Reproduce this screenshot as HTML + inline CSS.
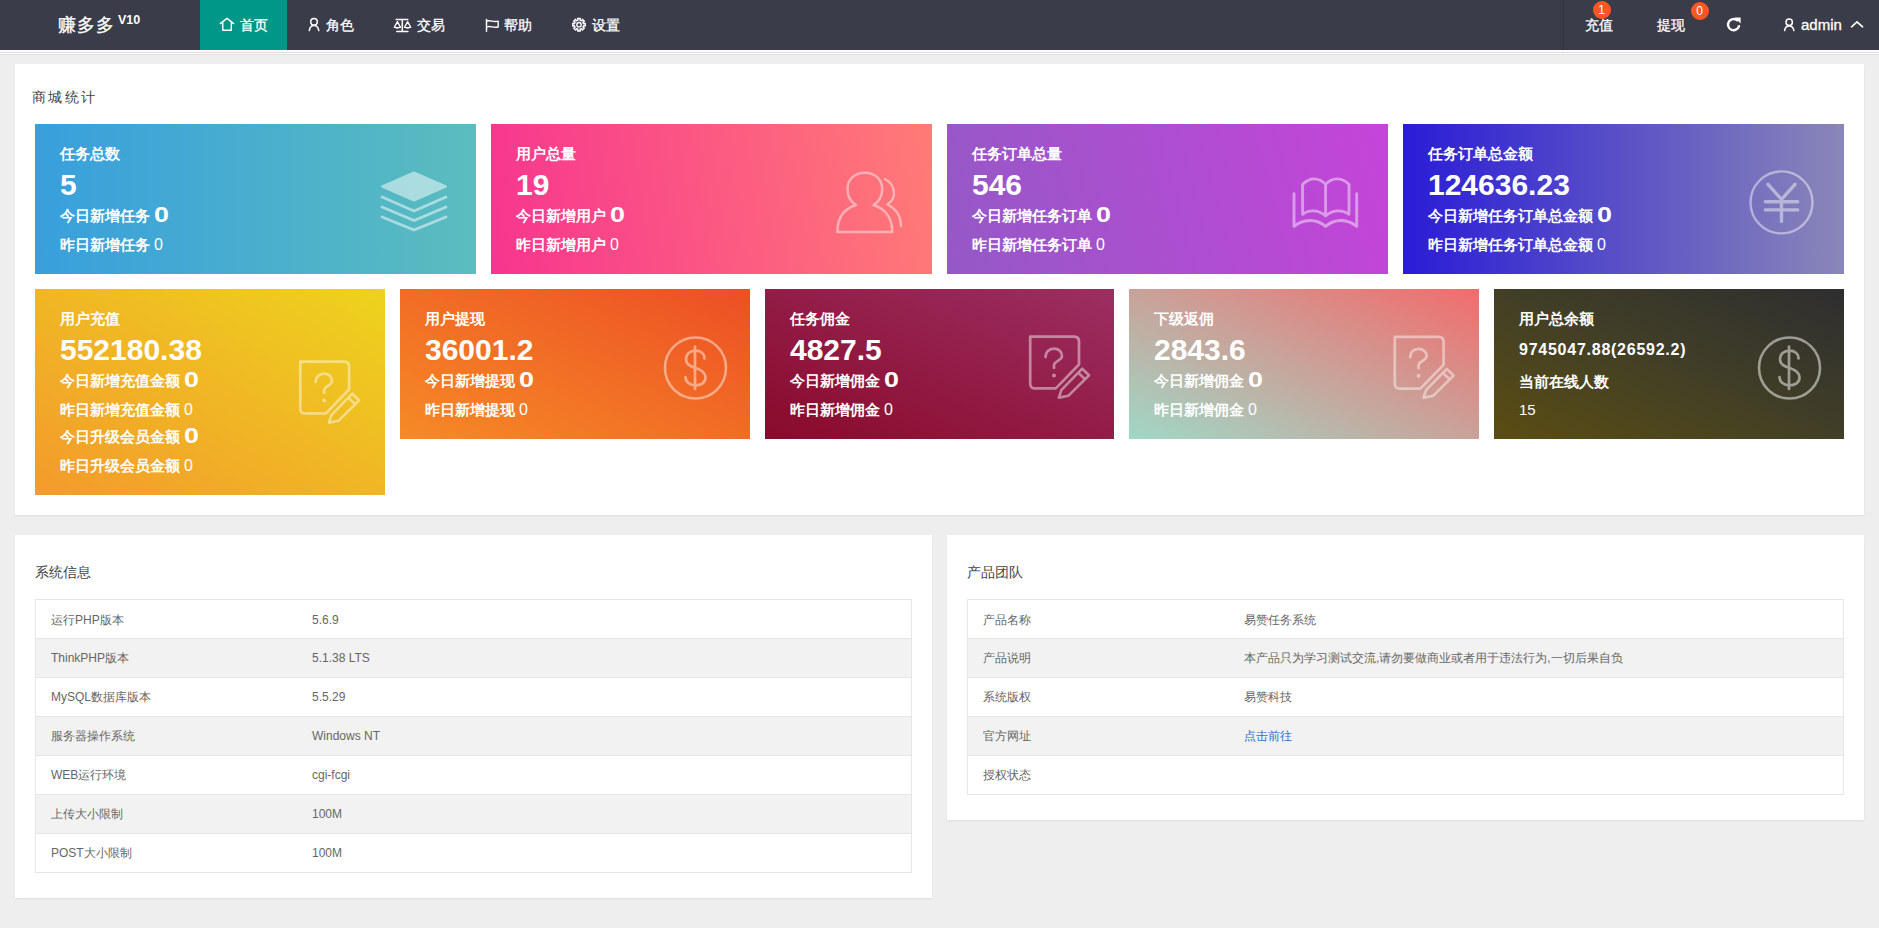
<!DOCTYPE html><html><head><meta charset="utf-8"><title>dashboard</title><style>
*{margin:0;padding:0;box-sizing:border-box}
html,body{width:1879px;height:928px;overflow:hidden}
body{background:#eeeeee;font-family:"Liberation Sans",sans-serif;position:relative;color:#666;font-size:14px}
.hdr{position:absolute;left:0;top:0;width:1879px;height:50px;background:#3a3c4a}
.logo{position:absolute;left:58px;top:0;height:50px;line-height:50px;color:#fff;font-size:18px;white-space:nowrap;-webkit-text-stroke:0.3px #fff}
.logo sup{font-size:12.5px;font-weight:bold;position:absolute;left:60px;top:-5px;line-height:50px;-webkit-text-stroke:0}
.nav{position:absolute;top:0;height:50px;line-height:50px;color:#fff;font-size:14px;white-space:nowrap;-webkit-text-stroke:0.3px #fff}
.nav span{position:absolute;top:0}
.nav.on{background:#009688}
.hdr svg{position:absolute}
.badge{position:absolute;width:18px;height:18px;border-radius:9px;background:#FF5722;color:#fff;font-size:12px;line-height:18px;text-align:center}
.stripe{position:absolute;left:0;width:1879px}
.card{position:absolute;background:#fff;box-shadow:0 1px 2px 0 rgba(0,0,0,.07)}
.ctitle{position:absolute;color:#444;font-size:14px;white-space:nowrap;line-height:20px}
.sc{position:absolute;color:#fff;overflow:hidden}
.sc .l{position:absolute;left:25px;white-space:nowrap;font-weight:bold;font-size:15px}
.sc .n{font-size:30px}
.sc .z{display:inline-block;font-size:22px;margin-left:4px;transform:scaleX(1.22);transform-origin:0 50%;position:relative;top:1px}
.sc .s{font-weight:normal;margin-left:4px;font-size:16px}
.sc svg{position:absolute;left:0;top:0}
.tbl{position:absolute;border:1px solid #e6e6e6;background:#fff}
.tbl .r{position:absolute;left:0;right:0;height:39px;font-size:12px;color:#666;line-height:20px}
.tbl .r.b{border-top:1px solid #e6e6e6}
.tbl .r.g{background:#f2f2f2}
.tbl .c1{position:absolute;left:15px;top:10px;white-space:nowrap}
.tbl .c2{position:absolute;top:10px;white-space:nowrap}
</style></head><body>
<div class="hdr">
<div class="logo"><span style="letter-spacing:1px">赚多多</span><sup>V10</sup></div>
<div class="nav on" style="left:200px;width:87px"><span style="left:40px">首页</span></div>
<div class="nav" style="left:287px;width:87px"><span style="left:39px">角色</span></div>
<div class="nav" style="left:374px;width:91px"><span style="left:43px">交易</span></div>
<div class="nav" style="left:465px;width:87px"><span style="left:39px">帮助</span></div>
<div class="nav" style="left:552px;width:88px"><span style="left:40px">设置</span></div>
<svg width="1879" height="50" style="left:0;top:0">
<path fill="none" stroke="#fff" stroke-linecap="round" stroke-linejoin="round" stroke-width="1.4" d="M220.3 23.6 L227 18.4 L233.7 23.6 M222.8 22.5 V30.3 H231.3 V22.5"/>
<circle fill="none" stroke="#fff" stroke-linecap="round" stroke-linejoin="round" stroke-width="1.5" cx="314" cy="21.8" r="3.3"/>
<path fill="none" stroke="#fff" stroke-linecap="round" stroke-linejoin="round" stroke-width="1.5" d="M309.3 30.6 C309.8 27.3 311.5 25.6 314 25.6 C316.5 25.6 318.2 27.3 318.8 30.6"/>
<path fill="none" stroke="#fff" stroke-linecap="round" stroke-linejoin="round" stroke-width="1.5" d="M396.2 19.6 H407.8 M402.3 19.6 V31.3 M396.8 31.4 H407.9"/>
<path fill="none" stroke="#fff" stroke-linecap="round" stroke-linejoin="round" stroke-width="1.3" d="M394.3 27.4 L397.4 21.6 L400.5 27.4 M404.5 27.4 L407.6 21.6 L410.7 27.4"/><path fill="#fff" d="M393.6 27 H401.2 Q397.4 30.4 393.6 27 Z M403.8 27 H411.4 Q407.6 30.4 403.8 27 Z"/>
<path fill="none" stroke="#fff" stroke-linecap="round" stroke-linejoin="round" stroke-width="1.5" d="M486.5 19.5 V31.3"/>
<path fill="none" stroke="#fff" stroke-linecap="round" stroke-linejoin="round" stroke-width="1.4" d="M487 21 C490 19.8 494 22.5 498.2 21.2 V27 C494 28.3 490 25.6 487 26.8"/>
<path fill="none" stroke="#fff" stroke-linecap="round" stroke-linejoin="round" stroke-width="1.4" d="M577.60 18.45 L580.40 18.45 L579.97 20.20 L581.49 20.83 L582.43 19.30 L584.40 21.27 L582.87 22.21 L583.50 23.73 L585.25 23.30 L585.25 26.10 L583.50 25.67 L582.87 27.19 L584.40 28.13 L582.43 30.10 L581.49 28.57 L579.97 29.20 L580.40 30.95 L577.60 30.95 L578.03 29.20 L576.51 28.57 L575.57 30.10 L573.60 28.13 L575.13 27.19 L574.50 25.67 L572.75 26.10 L572.75 23.30 L574.50 23.73 L575.13 22.21 L573.60 21.27 L575.57 19.30 L576.51 20.83 L578.03 20.20 Z"/><circle fill="none" stroke="#fff" stroke-linecap="round" stroke-linejoin="round" stroke-width="1.4" cx="579" cy="24.7" r="2.2"/>
</svg>
<div style="position:absolute;left:1563px;top:0;width:1px;height:50px;background:#30333d"></div>
<div class="nav" style="left:1585px;width:40px"><span style="left:0">充值</span></div>
<div class="nav" style="left:1656.5px;width:40px"><span style="left:0">提现</span></div>
<div class="badge" style="left:1592.5px;top:1px">1</div>
<div class="badge" style="left:1690.6px;top:2.4px">0</div>
<svg width="1879" height="50" style="left:0;top:0">
<path fill="none" stroke="#fff" stroke-linecap="round" stroke-linejoin="round" stroke-width="2.4" d="M1739 26.2 A5.6 5.6 0 1 1 1737.2 20.3"/>
<path fill="#fff" d="M1734.6 17.6 L1740.6 17.6 L1740.6 23.6 Z"/>
<circle fill="none" stroke="#fff" stroke-linecap="round" stroke-linejoin="round" stroke-width="1.5" cx="1789.2" cy="22.3" r="3.2"/>
<path fill="none" stroke="#fff" stroke-linecap="round" stroke-linejoin="round" stroke-width="1.5" d="M1784.6 30.6 C1785 27.6 1786.8 25.9 1789.2 25.9 C1791.6 25.9 1793.4 27.6 1793.9 30.6"/>
<path fill="none" stroke="#fff" stroke-linecap="round" stroke-linejoin="round" stroke-width="1.7" d="M1851.6 26.8 L1857 21.9 L1862.6 26.8"/>
</svg>
<div class="nav" style="left:1801px;width:50px;font-size:15px"><span style="left:0">admin</span></div>
</div>
<div class="stripe" style="top:50px;height:5px;background:#fbfbfb"></div>
<div class="stripe" style="top:52px;height:1px;background:#dcdcdc"></div>
<div class="stripe" style="top:54px;height:1px;background:#e2e2e2"></div>
<div class="card" style="left:15px;top:64px;width:1849px;height:451px"><div class="ctitle" style="left:17px;top:23px;font-size:14px;letter-spacing:2.3px">商城统计</div></div>
<div class="sc" style="left:35px;top:124px;width:440.5px;height:150px;background:linear-gradient(to right,#389fdd,#5abdbe)">
<div class="l" style="top:19.5px;height:20px;line-height:20px">任务总数</div>
<div class="l" style="top:41.0px;height:40px;line-height:40px"><span class="n">5</span></div>
<div class="l" style="top:77.0px;height:26px;line-height:26px">今日新增任务<span class="z">0</span></div>
<div class="l" style="top:109.0px;height:24px;line-height:24px">昨日新增任务<span class="s">0</span></div>
<svg width="440.5" height="150" viewBox="0 0 440.5 150"><g opacity="0.5"><path d="M347 62.5 L379 48.5 L411 62.5 L379 76.5 Z" fill="#fff" stroke="#fff" stroke-width="2" stroke-linejoin="round"/><path d="M347 73 L379 87 L411 73 M347 83 L379 96.5 L411 83 M347 93 L379 106 L411 93" fill="none" stroke="#fff" stroke-width="2.9" stroke-linecap="round" stroke-linejoin="round"/></g></svg>
</div>
<div class="sc" style="left:491px;top:124px;width:441px;height:150px;background:linear-gradient(82deg,#f7358f,#ff7b76)">
<div class="l" style="top:19.5px;height:20px;line-height:20px">用户总量</div>
<div class="l" style="top:41.0px;height:40px;line-height:40px"><span class="n">19</span></div>
<div class="l" style="top:77.0px;height:26px;line-height:26px">今日新增用户<span class="z">0</span></div>
<div class="l" style="top:109.0px;height:24px;line-height:24px">昨日新增用户<span class="s">0</span></div>
<svg width="441" height="150" viewBox="0 0 441 150"><g opacity="0.45"><path fill="none" stroke="#fff" stroke-linecap="round" stroke-linejoin="round" stroke-width="2.5" d="M365 81 C358 77 356.5 71 356.5 65 C356.5 55 364 48.8 373.8 48.8 C383.6 48.8 391.2 55 391.2 65 C391.2 71 389 77 382.5 81 C395 85 401.3 95 401.3 108 L346.4 108 C346.4 95 352.5 85 365 81 Z"/><path fill="none" stroke="#fff" stroke-linecap="round" stroke-linejoin="round" stroke-width="2.5" d="M394 55 C400 58 403 64 403 70 C403 75 400 78 396.5 80.5 C405 85 410 93 410 102"/></g></svg>
</div>
<div class="sc" style="left:947px;top:124px;width:441px;height:150px;background:linear-gradient(75deg,#9459c6,#c544d9)">
<div class="l" style="top:19.5px;height:20px;line-height:20px">任务订单总量</div>
<div class="l" style="top:41.0px;height:40px;line-height:40px"><span class="n">546</span></div>
<div class="l" style="top:77.0px;height:26px;line-height:26px">今日新增任务订单<span class="z">0</span></div>
<div class="l" style="top:109.0px;height:24px;line-height:24px">昨日新增任务订单<span class="s">0</span></div>
<svg width="441" height="150" viewBox="0 0 441 150"><g opacity="0.45"><path fill="none" stroke="#fff" stroke-linecap="round" stroke-linejoin="round" stroke-width="2.9" d="M347 69.7 V102.4 C356 95 369 94 378.6 102.4 C388 94 401 95 409.7 102.4 V69.7"/><path fill="none" stroke="#fff" stroke-linecap="round" stroke-linejoin="round" stroke-width="2.9" d="M355.6 90.3 V60.4 C363 53 372 53 378.6 60.4 C385 53 395 53 402 60.4 V90.3 C395 85 385 86 378.6 92 C372 86 362 85 355.6 90.3 Z M378.6 60.4 V92"/></g></svg>
</div>
<div class="sc" style="left:1403px;top:124px;width:441px;height:150px;background:linear-gradient(to right,#2a1cd6,#8a87b8)">
<div class="l" style="top:19.5px;height:20px;line-height:20px">任务订单总金额</div>
<div class="l" style="top:41.0px;height:40px;line-height:40px"><span class="n">124636.23</span></div>
<div class="l" style="top:77.0px;height:26px;line-height:26px">今日新增任务订单总金额<span class="z">0</span></div>
<div class="l" style="top:109.0px;height:24px;line-height:24px">昨日新增任务订单总金额<span class="s">0</span></div>
<svg width="441" height="150" viewBox="0 0 441 150"><g opacity="0.45"><circle fill="none" stroke="#fff" stroke-linecap="round" stroke-linejoin="round" stroke-width="2.4" cx="378.5" cy="78.4" r="31"/><path fill="none" stroke="#fff" stroke-linecap="round" stroke-linejoin="round" stroke-width="3.4" d="M365 60.3 L378.5 75.4 L392 60.3 M362.2 77.7 H394.7 M362.2 85.9 H394.7 M378.5 75.4 V97.4"/></g></svg>
</div>
<div class="sc" style="left:35px;top:289px;width:350px;height:206px;background:linear-gradient(to top right,#f39a2c,#edd31d)">
<div class="l" style="top:19.5px;height:20px;line-height:20px">用户充值</div>
<div class="l" style="top:41.0px;height:40px;line-height:40px"><span class="n">552180.38</span></div>
<div class="l" style="top:77.0px;height:26px;line-height:26px">今日新增充值金额<span class="z">0</span></div>
<div class="l" style="top:109.0px;height:24px;line-height:24px">昨日新增充值金额<span class="s">0</span></div>
<div class="l" style="top:133.0px;height:26px;line-height:26px">今日升级会员金额<span class="z">0</span></div>
<div class="l" style="top:165.0px;height:24px;line-height:24px">昨日升级会员金额<span class="s">0</span></div>
<svg width="350" height="206" viewBox="0 0 350 206"><g opacity="0.45"><g transform="translate(265.3,72.6)"><path fill="none" stroke="#fff" stroke-linecap="round" stroke-linejoin="round" stroke-width="2.7" d="M25.6 51.8 H5 Q0 51.8 0 46.8 V0 H43.8 Q48.8 0 48.8 5 V27.9 Z" /><path fill="none" stroke="#fff" stroke-linecap="round" stroke-linejoin="round" stroke-width="2.7" d="M15.3 20.5 C15.3 15.5 18.8 12.1 23.8 12.1 C28.6 12.1 31.8 15.3 31.8 19.3 C31.8 23.8 23.8 24.5 23.8 28.5 V31.4"/><circle cx="23.8" cy="39" r="2" fill="#fff"/><path fill="none" stroke="#fff" stroke-linecap="round" stroke-linejoin="round" stroke-width="2.6" d="M28.6 61 L31.3 53.2 L52 32.1 L58.8 38.7 L38.3 59.1 Z M48 36 L54.8 42.6"/></g></g></svg>
</div>
<div class="sc" style="left:400px;top:289px;width:350px;height:150px;background:linear-gradient(to top right,#f68a26,#ec4f24)">
<div class="l" style="top:19.5px;height:20px;line-height:20px">用户提现</div>
<div class="l" style="top:41.0px;height:40px;line-height:40px"><span class="n">36001.2</span></div>
<div class="l" style="top:77.0px;height:26px;line-height:26px">今日新增提现<span class="z">0</span></div>
<div class="l" style="top:109.0px;height:24px;line-height:24px">昨日新增提现<span class="s">0</span></div>
<svg width="350" height="150" viewBox="0 0 350 150"><g opacity="0.45"><circle fill="none" stroke="#fff" stroke-linecap="round" stroke-linejoin="round" stroke-width="2.6" cx="295.5" cy="79" r="30.5"/><g transform="translate(295.5,79)"><path fill="none" stroke="#fff" stroke-linecap="round" stroke-linejoin="round" stroke-width="2.7" d="M9 -9.5 C9 -14.5 5 -17.4 0 -17.4 C-5.5 -17.4 -9.5 -14 -9.5 -9 C-9.5 -3 -4 -1.5 0 0 C5 1.5 10 4 10 9.5 C10 14.5 5.5 17.4 0 17.4 C-5.5 17.4 -10 14 -10 9 M-0.5 -21.5 V21"/></g></g></svg>
</div>
<div class="sc" style="left:765px;top:289px;width:349px;height:150px;background:linear-gradient(to top right,#890a2b,#9c2f62)">
<div class="l" style="top:19.5px;height:20px;line-height:20px">任务佣金</div>
<div class="l" style="top:41.0px;height:40px;line-height:40px"><span class="n">4827.5</span></div>
<div class="l" style="top:77.0px;height:26px;line-height:26px">今日新增佣金<span class="z">0</span></div>
<div class="l" style="top:109.0px;height:24px;line-height:24px">昨日新增佣金<span class="s">0</span></div>
<svg width="349" height="150" viewBox="0 0 349 150"><g opacity="0.45"><g transform="translate(265.2,47.6)"><path fill="none" stroke="#fff" stroke-linecap="round" stroke-linejoin="round" stroke-width="2.7" d="M25.6 51.8 H5 Q0 51.8 0 46.8 V0 H43.8 Q48.8 0 48.8 5 V27.9 Z" /><path fill="none" stroke="#fff" stroke-linecap="round" stroke-linejoin="round" stroke-width="2.7" d="M15.3 20.5 C15.3 15.5 18.8 12.1 23.8 12.1 C28.6 12.1 31.8 15.3 31.8 19.3 C31.8 23.8 23.8 24.5 23.8 28.5 V31.4"/><circle cx="23.8" cy="39" r="2" fill="#fff"/><path fill="none" stroke="#fff" stroke-linecap="round" stroke-linejoin="round" stroke-width="2.6" d="M28.6 61 L31.3 53.2 L52 32.1 L58.8 38.7 L38.3 59.1 Z M48 36 L54.8 42.6"/></g></g></svg>
</div>
<div class="sc" style="left:1129px;top:289px;width:350px;height:150px;background:linear-gradient(to top right,#a0d8c6,#f26c6c)">
<div class="l" style="top:19.5px;height:20px;line-height:20px">下级返佣</div>
<div class="l" style="top:41.0px;height:40px;line-height:40px"><span class="n">2843.6</span></div>
<div class="l" style="top:77.0px;height:26px;line-height:26px">今日新增佣金<span class="z">0</span></div>
<div class="l" style="top:109.0px;height:24px;line-height:24px">昨日新增佣金<span class="s">0</span></div>
<svg width="350" height="150" viewBox="0 0 350 150"><g opacity="0.45"><g transform="translate(265.8,47.8)"><path fill="none" stroke="#fff" stroke-linecap="round" stroke-linejoin="round" stroke-width="2.7" d="M25.6 51.8 H5 Q0 51.8 0 46.8 V0 H43.8 Q48.8 0 48.8 5 V27.9 Z" /><path fill="none" stroke="#fff" stroke-linecap="round" stroke-linejoin="round" stroke-width="2.7" d="M15.3 20.5 C15.3 15.5 18.8 12.1 23.8 12.1 C28.6 12.1 31.8 15.3 31.8 19.3 C31.8 23.8 23.8 24.5 23.8 28.5 V31.4"/><circle cx="23.8" cy="39" r="2" fill="#fff"/><path fill="none" stroke="#fff" stroke-linecap="round" stroke-linejoin="round" stroke-width="2.6" d="M28.6 61 L31.3 53.2 L52 32.1 L58.8 38.7 L38.3 59.1 Z M48 36 L54.8 42.6"/></g></g></svg>
</div>
<div class="sc" style="left:1494px;top:289px;width:350px;height:150px;background:linear-gradient(to top right,#5b4d12 0%,#413f26 50%,#2e2e30 100%)">
<div class="l" style="top:19.5px;height:20px;line-height:20px">用户总余额</div>
<div class="l" style="top:46.0px;height:30px;line-height:30px"><span style="font-size:16px;letter-spacing:0.75px">9745047.88(26592.2)</span></div>
<div class="l" style="top:81.0px;height:24px;line-height:24px">当前在线人数</div>
<div class="l" style="top:108.5px;height:24px;line-height:24px"><span style="font-weight:normal">15</span></div>
<svg width="350" height="150" viewBox="0 0 350 150"><g opacity="0.5"><circle fill="none" stroke="#fff" stroke-linecap="round" stroke-linejoin="round" stroke-width="2.6" cx="295.5" cy="79" r="30.5"/><g transform="translate(295.5,79)"><path fill="none" stroke="#fff" stroke-linecap="round" stroke-linejoin="round" stroke-width="2.7" d="M9 -9.5 C9 -14.5 5 -17.4 0 -17.4 C-5.5 -17.4 -9.5 -14 -9.5 -9 C-9.5 -3 -4 -1.5 0 0 C5 1.5 10 4 10 9.5 C10 14.5 5.5 17.4 0 17.4 C-5.5 17.4 -10 14 -10 9 M-0.5 -21.5 V21"/></g></g></svg>
</div>
<div class="card" style="left:15px;top:535px;width:917px;height:363px"><div class="ctitle" style="left:20px;top:27px">系统信息</div></div>
<div class="tbl" style="left:35px;top:599px;width:877px;height:274px">
<div class="r" style="top:0px;height:38px"><div class="c1">运行PHP版本</div><div class="c2" style="left:276px">5.6.9</div></div>
<div class="r b g" style="top:38px;height:39px"><div class="c1" style="top:9px">ThinkPHP版本</div><div class="c2" style="left:276px;top:9px">5.1.38 LTS</div></div>
<div class="r b" style="top:77px;height:39px"><div class="c1" style="top:9px">MySQL数据库版本</div><div class="c2" style="left:276px;top:9px">5.5.29</div></div>
<div class="r b g" style="top:116px;height:39px"><div class="c1" style="top:9px">服务器操作系统</div><div class="c2" style="left:276px;top:9px">Windows NT</div></div>
<div class="r b" style="top:155px;height:39px"><div class="c1" style="top:9px">WEB运行环境</div><div class="c2" style="left:276px;top:9px">cgi-fcgi</div></div>
<div class="r b g" style="top:194px;height:39px"><div class="c1" style="top:9px">上传大小限制</div><div class="c2" style="left:276px;top:9px">100M</div></div>
<div class="r b" style="top:233px;height:39px"><div class="c1" style="top:9px">POST大小限制</div><div class="c2" style="left:276px;top:9px">100M</div></div>
</div>
<div class="card" style="left:947px;top:535px;width:917px;height:285px"><div class="ctitle" style="left:20px;top:27px">产品团队</div></div>
<div class="tbl" style="left:967px;top:599px;width:877px;height:196px">
<div class="r" style="top:0px;height:38px"><div class="c1">产品名称</div><div class="c2" style="left:276px">易赞任务系统</div></div>
<div class="r b g" style="top:38px;height:39px"><div class="c1" style="top:9px">产品说明</div><div class="c2" style="left:276px;top:9px">本产品只为学习测试交流,请勿要做商业或者用于违法行为,一切后果自负</div></div>
<div class="r b" style="top:77px;height:39px"><div class="c1" style="top:9px">系统版权</div><div class="c2" style="left:276px;top:9px">易赞科技</div></div>
<div class="r b g" style="top:116px;height:39px"><div class="c1" style="top:9px">官方网址</div><div class="c2" style="left:276px;top:9px"><span style="color:#1f6fd0">点击前往</span></div></div>
<div class="r b" style="top:155px;height:39px"><div class="c1" style="top:9px">授权状态</div><div class="c2" style="left:276px;top:9px"></div></div>
</div>
</body></html>
